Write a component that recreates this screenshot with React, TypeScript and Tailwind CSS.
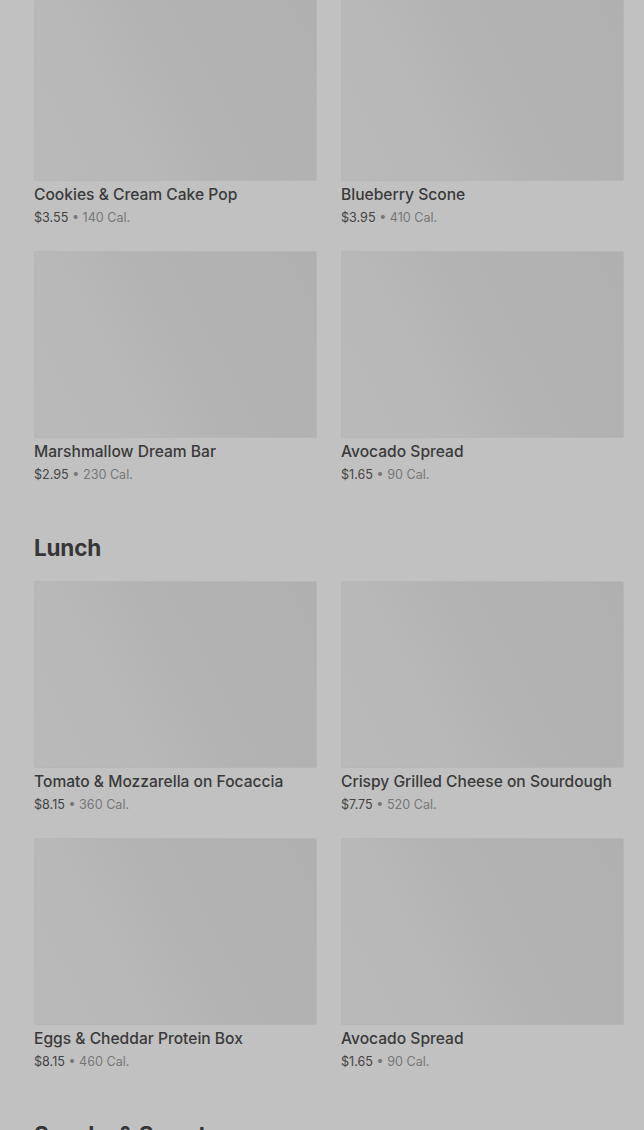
import React from "react";

type Item = { name: string; price: string; cal: string };

const breakfast: Item[] = [
  { name: "Cookies & Cream Cake Pop", price: "$3.55", cal: "140 Cal." },
  { name: "Blueberry Scone", price: "$3.95", cal: "410 Cal." },
  { name: "Marshmallow Dream Bar", price: "$2.95", cal: "230 Cal." },
  { name: "Avocado Spread", price: "$1.65", cal: "90 Cal." },
];

const lunch: Item[] = [
  { name: "Tomato & Mozzarella on Focaccia", price: "$8.15", cal: "360 Cal." },
  { name: "Crispy Grilled Cheese on Sourdough", price: "$7.75", cal: "520 Cal." },
  { name: "Eggs & Cheddar Protein Box", price: "$8.15", cal: "460 Cal." },
  { name: "Avocado Spread", price: "$1.65", cal: "90 Cal." },
];

const Card = ({ item }: { item: Item }) => (
  <div className="flex flex-col">
    <div className="h-[187px] w-full rounded-[2px] border border-[#b6b6b6] bg-[linear-gradient(62deg,#b9b9b9_0%,#b8b8b8_30%,#b3b3b3_52%,#b0b0b0_100%)]" />
    <div className="mt-[4px] text-[15.6px] leading-[20px] font-medium text-[#3a3a3a] whitespace-nowrap">{item.name}</div>
    <div className="mt-[3px] text-[12.6px] leading-[20px] text-[#777777]">
      <span className="text-[#434343]">{item.price}</span> • {item.cal}
    </div>
  </div>
);

const Grid = ({ items }: { items: Item[] }) => (
  <div className="grid grid-cols-2 gap-x-[24px] gap-y-[23px]">
    {items.map((it, i) => (
      <Card key={i} item={it} />
    ))}
  </div>
);

const Heading = ({ children }: { children: React.ReactNode }) => (
  <h2 className="mt-[47px] mb-[17px] text-[22.5px] leading-[32px] font-bold tracking-[-0.2px] text-[#363636] whitespace-nowrap">{children}</h2>
);

export default function App() {
  return (
    <div className="h-[1130px] overflow-hidden bg-[#c1c1c1] font-['Inter','Roboto',sans-serif]">
      <div className="pl-[34px] pr-[20px] mt-[-6px]">
        <Grid items={breakfast} />
        <Heading>Lunch</Heading>
        <Grid items={lunch} />
        <Heading>Snacks &amp; Sweets</Heading>
      </div>
    </div>
  );
}
